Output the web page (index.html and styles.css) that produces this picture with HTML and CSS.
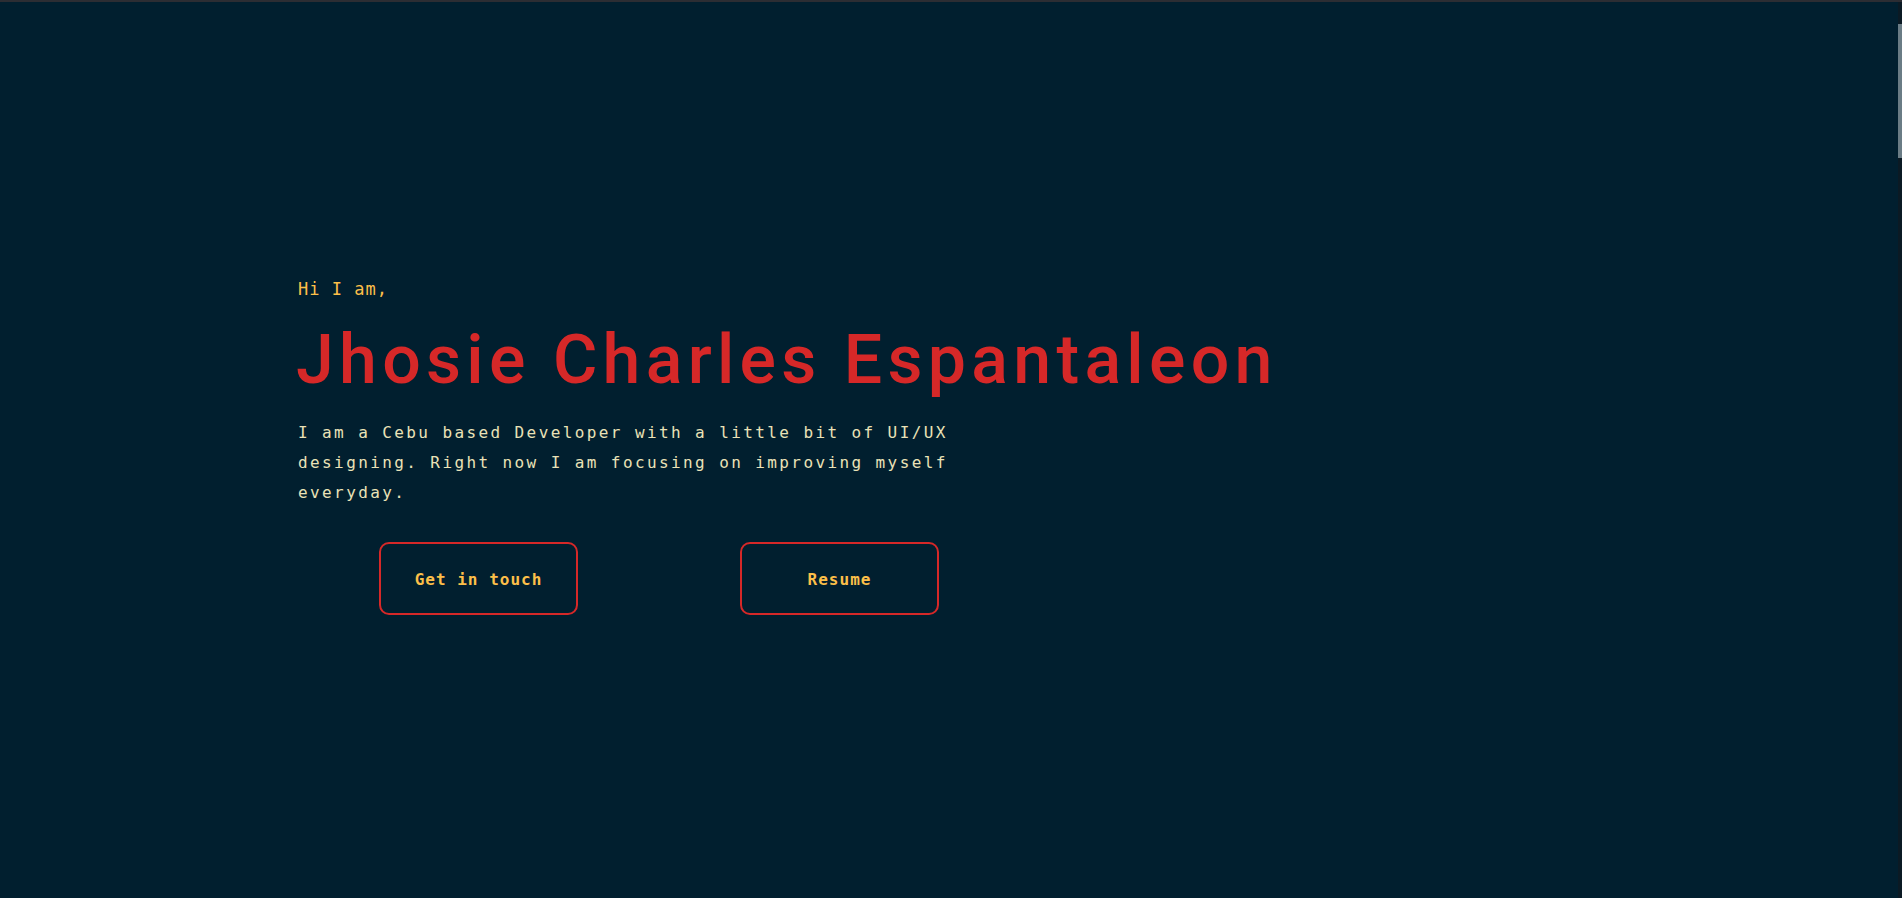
FILE: index.html
```html
<!DOCTYPE html>
<html lang="en">
<head>
<meta charset="utf-8">
<title>Jhosie Charles Espantaleon</title>
<link rel="stylesheet" href="styles.css">
</head>
<body>
<div class="topline"></div>
<div class="scroll-track"><div class="scroll-thumb"></div></div>
<main>
  <section class="hero">
    <p class="greet">Hi I am,</p>
    <h1 class="name">Jhosie Charles Espantaleon</h1>
    <p class="intro">I am a Cebu based Developer with a little bit of UI/UX designing. Right now I am focusing on improving myself everyday.</p>
    <div class="actions">
      <a class="btn" href="#contact">Get in touch</a>
      <a class="btn" href="#resume">Resume</a>
    </div>
  </section>
  <section class="section" id="about"></section>
  <section class="section" id="projects"></section>
  <section class="section" id="experience"></section>
  <section class="section" id="resume"></section>
  <section class="section" id="contact"></section>
</main>
</body>
</html>
```
FILE: styles.css
```css
html {
  background: #011f2f;
}
body {
  margin: 0;
  background: #011f2f;
  font-family: "DejaVu Sans Mono", "Liberation Mono", monospace;
}
.topline {
  position: fixed;
  top: 0;
  left: 0;
  right: 0;
  height: 2px;
  background: #2c2d33;
  z-index: 10;
}
.scroll-track {
  position: fixed;
  top: 2px;
  right: 0;
  bottom: 0;
  width: 4px;
  padding-top: 22px;
  box-sizing: border-box;
  background: #0b1a24;
  z-index: 9;
}
.scroll-thumb {
  height: 134px;
  background: #6a7c85;
}
.hero {
  min-height: 100vh;
  box-sizing: border-box;
  display: flex;
  flex-direction: column;
  justify-content: center;
  padding: 0 0 6px 298px;
}
.greet {
  margin: 0;
  font-size: 17px;
  line-height: 24px;
  letter-spacing: 1px;
  color: #fcbf49;
}
.name {
  margin: 22px 0 0 -2px;
  font-family: Roboto, "Noto Sans", sans-serif;
  font-weight: 500;
  font-size: 68px;
  line-height: 1.1;
  letter-spacing: 5.3px;
  color: #d62828;
}
.intro {
  margin: 20px 0 0;
  max-width: 680px;
  font-size: 16px;
  line-height: 30px;
  letter-spacing: 2.4px;
  color: #eae2b7;
}
.actions {
  display: flex;
  justify-content: space-around;
  width: 722px;
  margin-top: 34px;
}
.btn {
  box-sizing: border-box;
  display: flex;
  align-items: center;
  justify-content: center;
  width: 199px;
  height: 73px;
  padding-top: 3px;
  border: 2px solid #d62828;
  border-radius: 10px;
  color: #fcbf49;
  font-weight: bold;
  font-size: 16px;
  letter-spacing: 1px;
  text-decoration: none;
}
.section {
  min-height: 100vh;
}
```
